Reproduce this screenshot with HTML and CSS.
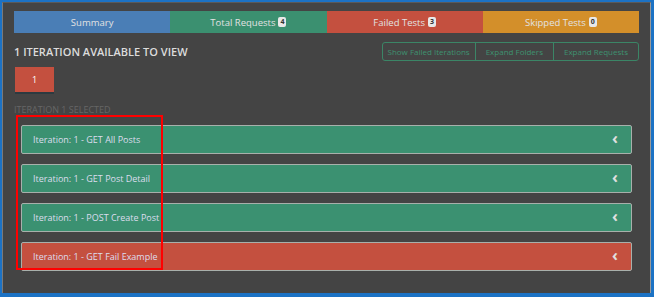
FILE: index.html
```html
<!DOCTYPE html>
<html>
<head>
  <title>Iterations</title>
  <link rel="stylesheet" href="styles.css">
</head>
<body>
  <div class="frame">
    <div class="tabs">
      <div class="tab summary">Summary</div>
      <div class="tab total">Total Requests <span class="badge">4</span></div>
      <div class="tab failed">Failed Tests <span class="badge">3</span></div>
      <div class="tab skipped">Skipped Tests <span class="badge">0</span></div>
    </div>

    <div class="toolbar">
      <h2>1 ITERATION AVAILABLE TO VIEW</h2>
      <div class="btn-group">
        <button>Show Failed Iterations</button>
        <button>Expand Folders</button>
        <button>Expand Requests</button>
      </div>
    </div>

    <button class="iter-btn">1</button>
    <div class="selected">ITERATION 1 SELECTED</div>

    <div class="requests">
      <div class="request pass"><span>Iteration: 1 - GET All Posts</span><span class="chev">&#8249;</span></div>
      <div class="request pass"><span>Iteration: 1 - GET Post Detail</span><span class="chev">&#8249;</span></div>
      <div class="request pass"><span>Iteration: 1 - POST Create Post</span><span class="chev">&#8249;</span></div>
      <div class="request fail"><span>Iteration: 1 - GET Fail Example</span><span class="chev">&#8249;</span></div>
    </div>

    <!-- annotation box drawn over the list -->
    <div class="highlight"></div>
  </div>
</body>
</html>
```

FILE: styles.css
```css
body {
  margin: 0;
  background-color: #1c72c4;
  font-family: "Open Sans", "Noto Sans", sans-serif;
  padding: 2px 3px 4px 2px;
  height: 297px;
  box-sizing: border-box;
}
.frame {
  position: relative;
  height: 100%;
  box-sizing: border-box;
  background-color: #444444;
  border-top: 1px solid #5a5a5a;
  border-left: 1px solid #7a7a7a;
  border-right: 1px solid #9a9a9a;
  padding: 8px 11px 0 11px;
}
.tabs {
  display: flex;
  height: 22px;
}
.tab {
  flex: 1;
  display: flex;
  align-items: center;
  justify-content: center;
  gap: 3px;
  color: #e2e2e2;
  font-size: 9.5px;
}
.summary { background-color: #4a7eb6; }
.total { background-color: #3b9070; }
.failed { background-color: #c4503f; }
.skipped { background-color: #d38f2a; }
.badge {
  background-color: #e8e8e8;
  color: #333;
  font-size: 7px;
  font-weight: bold;
  padding: 0 2px;
  border-radius: 2px;
  line-height: 10px;
}
.toolbar {
  display: flex;
  justify-content: space-between;
  align-items: flex-start;
  margin-top: 9px;
  height: 19px;
}
.toolbar h2 {
  margin: 2px 0 0 0;
  font-size: 11px;
  font-weight: 600;
  color: #dcdcdc;
  line-height: 15px;
}
.btn-group {
  display: flex;
  border: 1px solid #3b8566;
  border-radius: 3px;
  height: 19px;
  box-sizing: border-box;
}
.btn-group button {
  background: none;
  border: none;
  border-left: 1px solid #3b8566;
  color: #3e9270;
  font-family: inherit;
  font-size: 8px;
  padding: 0 10px;
}
.btn-group button:first-child {
  border-left: none;
  padding: 0 5px;
}
.iter-btn {
  display: block;
  margin: 6px 0 0 1px;
  width: 39px;
  height: 25px;
  border: none;
  background-color: #c4503f;
  color: #fff;
  font-family: inherit;
  font-size: 9px;
  box-shadow: 0 2px 0 #2c3a40;
}
.selected {
  margin-top: 11px;
  font-size: 9px;
  color: #666;
}
.requests {
  margin: 9px 7px 0 7px;
  display: flex;
  flex-direction: column;
  gap: 10px;
}
.request {
  display: flex;
  justify-content: space-between;
  align-items: center;
  height: 29px;
  box-sizing: border-box;
  padding: 0 13px 0 11px;
  border: 1px solid #a8b0ab;
  border-radius: 2px;
  color: #dde;
  font-size: 9px;
}
.pass { background-color: #3b9171; }
.fail { background-color: #c4503f; }
.chev {
  font-size: 16px;
  font-weight: bold;
  color: #e0e0e0;
  line-height: 1;
  margin-top: -3px;
}
.highlight {
  position: absolute;
  left: 13px;
  top: 112px;
  width: 143px;
  height: 151px;
  border: 2px solid #ff0000;
}
```
